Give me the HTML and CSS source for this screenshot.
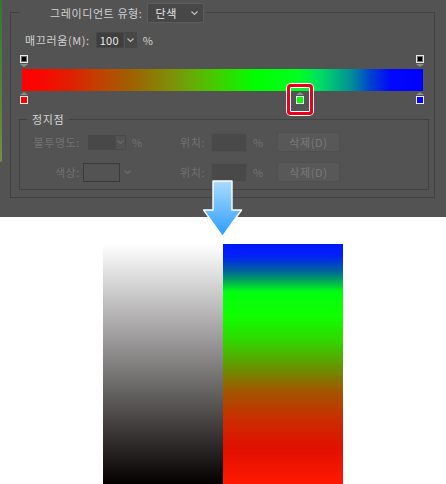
FILE: index.html
```html
<!DOCTYPE html>
<html>

<head>
    <meta charset="UTF-8">
    <title>그레이디언트 정지점</title>
    <link rel="stylesheet" href="styles.css">
</head>

<body>
    <div class="panel">
        <div class="group">
            <div class="legend">
                <span class="label">그레이디언트 유형:</span>
                <div class="select">
                    <span>단색</span>
                    <svg class="chev" width="7" height="4" viewBox="0 0 7 4"><polyline points="0.5,0.5 3.5,3.5 6.5,0.5" /></svg>
                </div>
            </div>
            <div class="smooth">
                <span class="label">매끄러움(M):</span>
                <div class="num">100</div>
                <div class="spin"><svg class="chev" width="7" height="4" viewBox="0 0 7 4"><polyline points="0.5,0.5 3.5,3.5 6.5,0.5" /></svg></div>
                <span class="unit">%</span>
            </div>
            <div class="ramp">
                <div class="stops-top">
                    <div class="stop-top" style="left: -2px"></div>
                    <div class="stop-top" style="left: 394px"></div>
                </div>
                <div class="bar"></div>
                <div class="stops-bottom">
                    <div class="stop-bottom red" style="left: -2px"></div>
                    <div class="stop-bottom green" style="left: 274px"></div>
                    <div class="stop-bottom blue" style="left: 394px"></div>
                </div>
                <!-- Callout round the selected stop. -->
                <div class="highlight"></div>
            </div>
            <div class="group inner">
                <div class="legend small">정지점</div>
                <div class="row first">
                    <div class="left">
                        <span class="name">불투명도:</span>
                        <div class="field"></div>
                        <div class="field-spin"><svg class="chev dim" width="7" height="4" viewBox="0 0 7 4"><polyline points="0.5,0.5 3.5,3.5 6.5,0.5" /></svg></div>
                        <span class="pct">%</span>
                    </div>
                    <span class="name">위치:</span>
                    <div class="pos"></div>
                    <span class="pct">%</span>
                    <div class="btn">삭제(D)</div>
                </div>
                <div class="row">
                    <div class="left">
                        <span class="name">색상:</span>
                        <div class="color-well"></div>
                        <svg class="chev dim well-chev" width="7" height="4" viewBox="0 0 7 4"><polyline points="0.5,0.5 3.5,3.5 6.5,0.5" /></svg>
                    </div>
                    <span class="name">위치:</span>
                    <div class="pos"></div>
                    <span class="pct">%</span>
                    <div class="btn">삭제(D)</div>
                </div>
            </div>
        </div>
    </div>

    <svg class="arrow" width="40" height="58" viewBox="0 0 40 58">
        <defs>
            <linearGradient id="arrowFill" x1="0" y1="0" x2="0" y2="1">
                <stop offset="0" stop-color="#aadcff" />
                <stop offset="1" stop-color="#2a9cff" />
            </linearGradient>
        </defs>
        <path d="M10,1 H29 V30 H38.5 L19.5,56.5 L0.5,30 H10 Z" fill="url(#arrowFill)" stroke="#ffffff" stroke-width="1.4" stroke-linejoin="round" />
    </svg>

    <div class="swatches">
        <div class="swatch grey"></div>
        <div class="swatch colour"></div>
    </div>
</body>

</html>
```

FILE: styles.css
```css
body {
    margin: 0;
    background: #FFFFFF;
    font-family: "Noto Sans CJK KR", "Noto Sans", sans-serif;
    font-size: 11px;
    line-height: 14px;
    letter-spacing: 0.6px;
    position: relative;
}

/* Dark dialog crop at the top. */
.panel {
    height: 217px;
    box-sizing: border-box;
    padding-top: 12px;
    background: linear-gradient(#2e7a30, #62863a 55%, #7b8a45 74%, transparent 75%) left top / 2px 100% no-repeat, #535353;
    color: #cfcfcf;
}

.group {
    margin-left: 10px;
    width: 425px;
    box-sizing: border-box;
    border: 1px solid #424242;
    padding-bottom: 7px;
}

.legend {
    display: flex;
    align-items: center;
    width: fit-content;
    height: 20px;
    margin: -10px 0 0 9px;
    padding: 0 2px 0 30px;
    background: #535353;
}

.label {
    color: #d2d2d2;
}

.select {
    display: flex;
    align-items: center;
    margin-left: 5px;
    width: 57px;
    height: 20px;
    box-sizing: border-box;
    padding: 0 5px 0 7px;
    background: #474747;
    border: 1px solid #5d5d5d;
    border-radius: 2px;
    color: #e8e8e8;
}

.select .chev {
    margin-left: auto;
}

.chev polyline {
    fill: none;
    stroke: #bdbdbd;
    stroke-width: 1.2;
}

.chev.dim polyline {
    stroke: #6a6a6a;
}

.smooth {
    display: flex;
    align-items: center;
    height: 17px;
    margin: 8px 0 0 14px;
}

.num {
    margin-left: 6px;
    width: 28px;
    height: 16px;
    box-sizing: border-box;
    padding-left: 3px;
    background: #3e3e3e;
    border: 1px solid #474747;
    color: #ececec;
    line-height: 14px;
    letter-spacing: 0.3px;
}

.spin {
    display: flex;
    align-items: center;
    justify-content: center;
    margin-left: 1px;
    width: 12px;
    height: 16px;
    background: #474747;
}

.unit {
    margin-left: 6px;
    color: #d2d2d2;
}

/* Gradient ramp with its stops. */
.ramp {
    position: relative;
    width: 401px;
    margin: 7px 0 0 11px;
}

.stops-top {
    position: relative;
    height: 12px;
}

.stops-bottom {
    position: relative;
    height: 14px;
}

.bar {
    height: 22px;
    margin-top: 2px;
    background: linear-gradient(to right, #ff0000 0%, #f80800 5%, #e02000 12%, #c24000 19%, #a06000 27%, #78980a 39%, #40d000 49%, #00ff00 58%, #00ff20 69%, #00e060 74%, #009098 82%, #0040d0 87%, #0008fc 92%, #0000ff 100%);
}

.stop-top,
.stop-bottom {
    position: absolute;
    top: 0;
    width: 8px;
}

.stop-top::before {
    content: "";
    display: block;
    width: 8px;
    height: 8px;
    box-sizing: border-box;
    border: 1px solid #e8e8e8;
    background: #000000;
    box-shadow: inset 0 0 0 1px #6a6a6a;
}

.stop-top::after {
    content: "";
    display: block;
    margin-top: 1px;
    border-left: 4px solid transparent;
    border-right: 4px solid transparent;
    border-top: 3px solid #8c8c8c;
}

.stop-bottom::before {
    content: "";
    display: block;
    margin-top: 1px;
    border-left: 4px solid transparent;
    border-right: 4px solid transparent;
    border-bottom: 3px solid #8c8c8c;
}

.stop-bottom::after {
    content: "";
    display: block;
    margin-top: 1px;
    width: 8px;
    height: 8px;
    box-sizing: border-box;
    border: 1px solid #f0f0f0;
    background: var(--stop, #000);
}

.red {
    --stop: #ff0000;
}

.green {
    --stop: #00ff00;
}

.blue {
    --stop: #0000ff;
}

.highlight {
    position: absolute;
    left: 265px;
    top: 29px;
    width: 26px;
    height: 31px;
    box-sizing: border-box;
    border: 3px solid #e8001c;
    border-radius: 4px;
    box-shadow: 0 0 0 1px #ffffff, inset 0 0 0 1px #ffffff;
}

/* "Stops" box, everything disabled. */
.group.inner {
    margin: 14px 0 0 8px;
    width: 410px;
    padding-bottom: 7px;
}

.legend.small {
    height: 14px;
    margin: -8px 0 0 7px;
    padding: 0 5px;
    color: #d6d6d6;
}

.row {
    display: flex;
    align-items: center;
    height: 20px;
    margin-top: 10px;
    color: #727272;
}

.row.first {
    margin-top: 6px;
}

.left {
    display: flex;
    align-items: center;
    width: 160px;
}

.left .name {
    width: 60px;
    text-align: right;
}

.field {
    margin-left: 8px;
    width: 27px;
    height: 15px;
    background: #484848;
}

.field-spin {
    display: flex;
    align-items: center;
    justify-content: center;
    width: 11px;
    height: 15px;
    box-sizing: border-box;
    border: 1px solid #4a4a4a;
}

.pct {
    margin-left: 6px;
}

.color-well {
    margin-left: 3px;
    width: 37px;
    height: 19px;
    box-sizing: border-box;
    border: 1px solid #3a3a3a;
}

.well-chev {
    margin-left: 4px;
}

.pos {
    margin-left: 6px;
    width: 36px;
    height: 19px;
    box-sizing: border-box;
    background: #494949;
    border: 1px solid #505050;
}

.btn {
    margin-left: 13px;
    width: 63px;
    height: 20px;
    box-sizing: border-box;
    border: 1px solid #505050;
    background: #585858;
    border-radius: 2px;
    text-align: center;
    line-height: 18px;
    color: #7a7a7a;
}

.arrow {
    position: absolute;
    left: 203px;
    top: 180px;
}

/* The result, ramp turned upright. */
.swatches {
    display: flex;
    margin: 27px 0 0 103px;
}

.swatch {
    width: 120px;
    height: 240px;
}

.grey {
    background: linear-gradient(#ffffff, #050000);
}

.colour {
    background: linear-gradient(#0018ff 0%, #0020f8 5%, #0060a0 11%, #00a060 15%, #00ff10 20%, #10ff00 30%, #30d800 40%, #6a9000 52%, #a05800 61%, #c83000 72%, #e01000 85%, #ff1800 100%);
}
```
